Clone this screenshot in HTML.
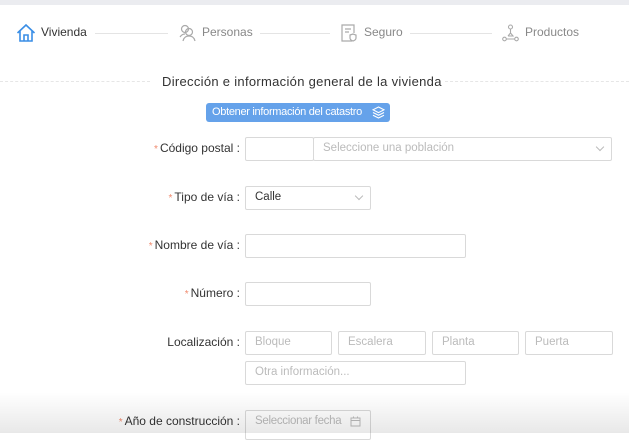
<!DOCTYPE html>
<html><head><meta charset="utf-8"><style>
*{box-sizing:border-box;margin:0;padding:0}
body{width:629px;height:433px;overflow:hidden;background:#fff;font-family:"Liberation Sans",Arial,sans-serif;position:relative;color:#333}
.a{position:absolute}
.top{left:0;top:0;width:629px;height:5px;background:#ebecf0}
.st{font-size:12px;top:25px;color:#888}
.ln{height:1px;background:#e4e4e4;top:33px}
.lbl{font-size:12px;color:#333;text-align:right;width:240px;left:0}
.lbl b{color:#f08a6e;font-weight:normal;font-size:10px;margin-right:2px}
.in{border:1px solid #d9d9d9;border-radius:2px;height:24px;font-size:11.5px;color:#bbb;padding:4px 9px;background:#fff}
.chev{position:absolute;right:8px;top:6px;width:6px;height:6px;border-right:1px solid #bbb;border-bottom:1px solid #bbb;transform:rotate(45deg)}
</style></head><body>
<div class="a top"></div>
<svg class="a" style="left:16px;top:23px" width="20" height="20" viewBox="0 0 20 20" fill="none" stroke="#3a8ee6" stroke-width="1.6"><path d="M1.5 10 L10 2 L18.5 10 M4 8 V18 H16 V8 M8 18 V12 H12 V18"/></svg>
<div class="a st" style="left:41px;color:#333">Vivienda</div>
<div class="a ln" style="left:95px;width:73px"></div>
<svg class="a" style="left:179px;top:24px" width="17" height="18" viewBox="0 0 17 18" fill="none" stroke="#aaa" stroke-width="1.2"><circle cx="6" cy="5" r="3.5"/><circle cx="10" cy="8" r="3.5"/><path d="M1 13 Q3 10 6 10 M4 17 Q5 12 10 12 Q15 12 16 17"/></svg>
<div class="a st" style="left:202px">Personas</div>
<div class="a ln" style="left:260px;width:70px"></div>
<svg class="a" style="left:341px;top:24px" width="16" height="18" viewBox="0 0 16 18" fill="none" stroke="#aaa" stroke-width="1.2"><path d="M11 17 H1 V1 H13 V9 M4 5 H10 M4 8 H8"/><path d="M9 11 L12 10 L15 11 V14 Q15 16 12 17 Q9 16 9 14 Z"/></svg>
<div class="a st" style="left:364px">Seguro</div>
<div class="a ln" style="left:410px;width:82px"></div>
<svg class="a" style="left:502px;top:24px" width="17" height="18" viewBox="0 0 17 18" fill="none" stroke="#aaa" stroke-width="1.1"><circle cx="8.5" cy="3" r="2"/><circle cx="2.5" cy="15" r="1.8"/><circle cx="14.5" cy="15" r="1.8"/><path d="M8.5 5 V9 M6 12 L8.5 9 L11 12 H6 M4.3 15 H12.7"/></svg>
<div class="a st" style="left:525px">Productos</div>
<div class="a" style="left:0;top:81px;width:150px;border-top:1px dashed #e6e6e6"></div>
<div class="a" style="left:445px;top:81px;width:184px;border-top:1px dashed #e6e6e6"></div>
<div class="a" style="left:162px;top:74px;font-size:13px;color:#333;letter-spacing:0.3px">Dirección e información general de la vivienda</div>
<div class="a" style="left:206px;top:103px;width:184px;height:19px;background:#65a2ea;border-radius:3px;color:#fff;font-size:11px;padding:3px 0 0 6px;letter-spacing:-0.3px">Obtener información del catastro</div>
<svg class="a" style="left:372px;top:106px" width="13" height="13" viewBox="0 0 13 13" fill="none" stroke="#fff" stroke-width="1.1"><path d="M6.5 1 L12 3.8 L6.5 6.6 L1 3.8 Z M1 6.5 L6.5 9.3 L12 6.5 M1 9.2 L6.5 12 L12 9.2"/></svg>

<div class="a lbl" style="top:141px"><b>*</b>Código postal :</div>
<div class="a in" style="left:245px;top:137px;width:69px"></div>
<div class="a in" style="left:313px;top:137px;width:299px">Seleccione una población<span class="chev"></span></div>
<div class="a lbl" style="top:190px"><b>*</b>Tipo de vía :</div>
<div class="a in" style="left:245px;top:186px;width:126px;color:#333">Calle<span class="chev"></span></div>
<div class="a lbl" style="top:238px"><b>*</b>Nombre de vía :</div>
<div class="a in" style="left:245px;top:234px;width:221px"></div>
<div class="a lbl" style="top:286px"><b>*</b>Número :</div>
<div class="a in" style="left:245px;top:282px;width:126px"></div>
<div class="a lbl" style="top:335px">Localización :</div>
<div class="a in" style="left:245px;top:331px;width:87px">Bloque</div>
<div class="a in" style="left:338px;top:331px;width:88px">Escalera</div>
<div class="a in" style="left:432px;top:331px;width:87px">Planta</div>
<div class="a in" style="left:525px;top:331px;width:88px">Puerta</div>
<div class="a in" style="left:245px;top:361px;width:221px">Otra información...</div>
<div class="a lbl" style="top:414px"><b>*</b>Año de construcción :</div>
<div class="a in" style="left:245px;top:410px;width:126px;height:30px;letter-spacing:-0.3px">Seleccionar fecha</div>
<svg class="a" style="left:350px;top:416px" width="11" height="11" viewBox="0 0 11 11" fill="none" stroke="#bbb" stroke-width="1"><rect x="1" y="2" width="9" height="8"/><path d="M1 4.5 H10 M3.5 0.5 V2.5 M7.5 0.5 V2.5"/></svg>
<div class="a" style="left:0;top:392px;width:629px;height:41px;background:linear-gradient(rgba(0,0,0,0),rgba(0,0,0,0.09))"></div>
</body></html>
